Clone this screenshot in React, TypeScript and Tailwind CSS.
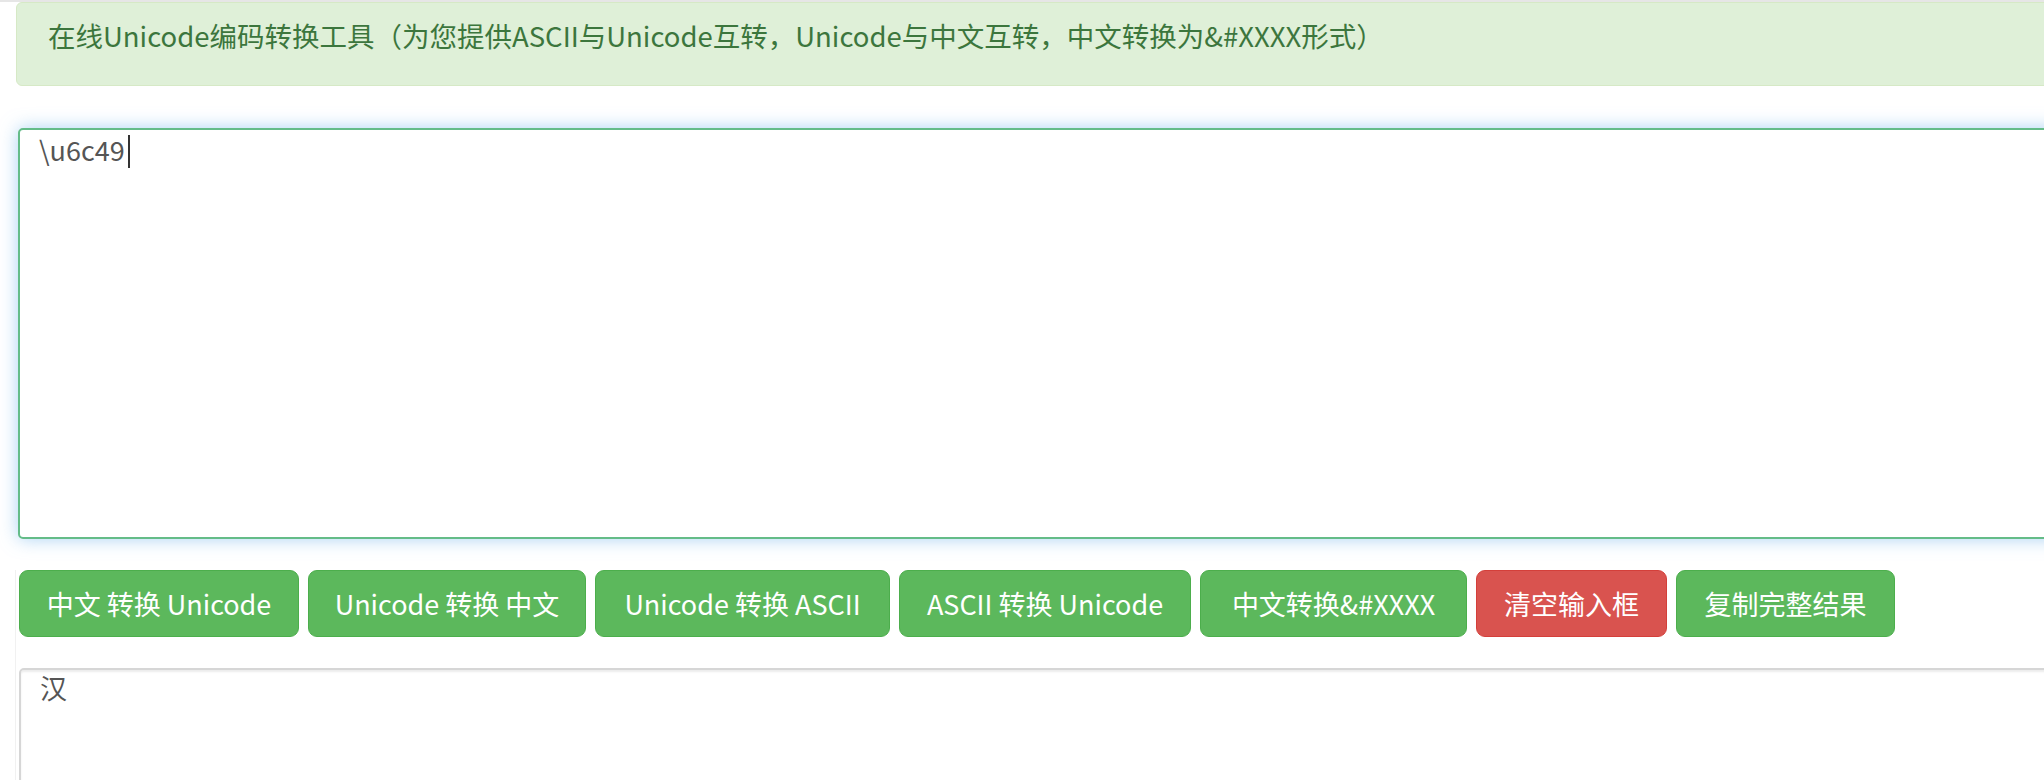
import React from "react";

const buttons = [
  { label: "中文 转换 Unicode", w: "w-[280px]", danger: false },
  { label: "Unicode 转换 中文", w: "w-[278px]", danger: false },
  { label: "Unicode 转换 ASCII", w: "w-[295px]", danger: false },
  { label: "ASCII 转换 Unicode", w: "w-[292px]", danger: false },
  { label: "中文转换&#XXXX", w: "w-[267px]", danger: false },
  { label: "清空输入框", w: "w-[191px]", danger: true },
  { label: "复制完整结果", w: "w-[219px]", danger: false },
];

export default function App() {
  return (
    <div
      className="w-full h-[780px] overflow-hidden bg-white"
      style={{ fontFamily: '"Noto Sans CJK SC", "Liberation Sans", sans-serif' }}
    >
      <div className="h-[2px] bg-[#e6e6e6]" />

      {/* alert */}
      <div className="ml-[16px] w-[2100px] h-[84px] rounded-[6px] border border-[#d6e9c6] bg-[#dff0d8] pl-[31px] pt-[13px]">
        <p className="text-[27.5px] leading-[38px] text-[#3c763d] whitespace-nowrap">
          在线Unicode编码转换工具（为您提供ASCII与Unicode互转，Unicode与中文互转，中文转换为&amp;#XXXX形式）
        </p>
      </div>

      {/* input */}
      <div className="ml-[18px] mt-[42px] w-[2100px] h-[411px] rounded-[5px] border-2 border-[#64bc88] bg-white pl-[19px] pt-[1px] shadow-[0_0_18px_rgba(102,175,233,0.55)]">
        <div className="text-[27px] leading-[38px] text-[#555555] whitespace-nowrap">
          \u6c49
          <span className="inline-block w-[2px] h-[33px] bg-[#333333] align-middle ml-[3px] -mt-[4px]" />
        </div>
      </div>

      <div className="ml-[15px] border-l border-[#f1f1f1] pl-[3px] h-[300px]">
        {/* buttons */}
        <div className="flex gap-[9px] mt-[31px]">
          {buttons.map((b) => (
            <button
              key={b.label}
              className={`${b.w} h-[67px] shrink-0 rounded-[9px] border-[1.5px] text-[27px] leading-none text-white whitespace-nowrap flex items-center justify-center ${
                b.danger ? "bg-[#d9534f] border-[#d43f3a]" : "bg-[#5cb85c] border-[#4cae4c]"
              }`}
            >
              {b.label}
            </button>
          ))}
        </div>

        {/* output */}
        <div className="mt-[31px] w-[2100px] h-[200px] rounded-[5px] border-2 border-[#d6d6d6] bg-white pl-[19px] shadow-[inset_0_2px_2px_rgba(0,0,0,0.075)]">
          <div className="text-[27px] leading-[36px] text-[#555555]">汉</div>
        </div>
      </div>
    </div>
  );
}
